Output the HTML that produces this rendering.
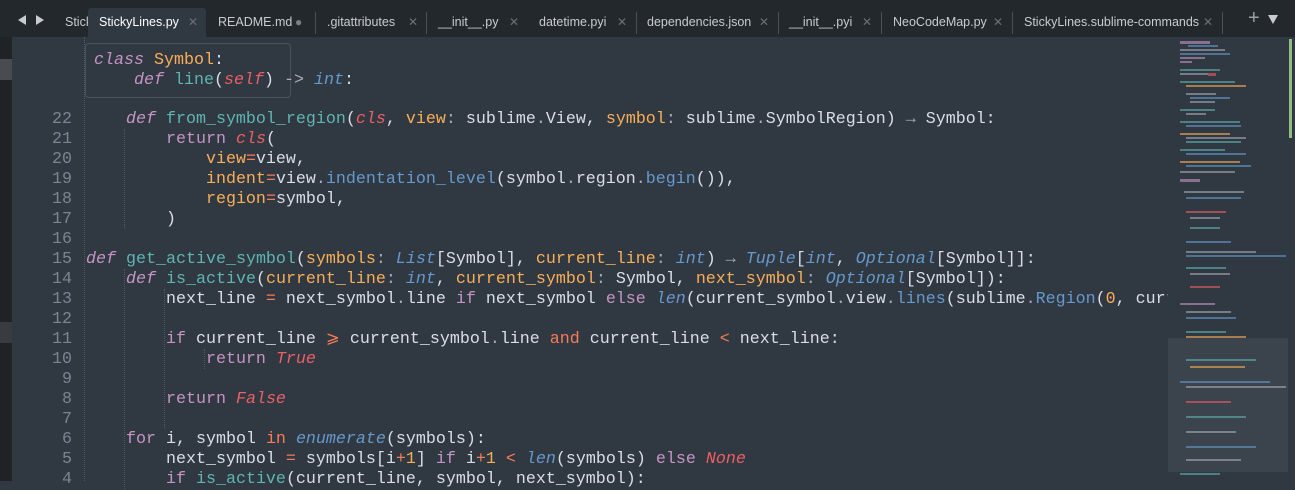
<!DOCTYPE html>
<html><head><meta charset="utf-8"><style>
body{margin:0;width:1295px;height:481px;overflow:hidden;background:#303841;position:relative;font-family:"Liberation Sans",sans-serif}
#tabbar{position:absolute;left:0;top:0;width:1295px;height:37px;background:#23282d}
.tab{position:absolute;top:8px;height:29px;line-height:28px;font-size:12.5px;color:#c8ccd0;white-space:nowrap}
.x{position:absolute;top:8px;line-height:28px;color:#6a7078;font-size:12px}
.sep{position:absolute;top:12px;width:1px;height:22px;background:#4a5058}
#left{position:absolute;left:0;top:37px;width:12px;height:444px;background:#1f2326}
#ed{position:absolute;left:12px;top:37px;width:1283px;height:444px;background:#303841}
.code{position:absolute;left:0;top:0;font-family:"Liberation Mono",monospace;font-size:16.67px;line-height:20px;color:#d8dee9;white-space:pre}
.ln{position:absolute;left:20px;width:40px;text-align:right;font-family:"Liberation Mono",monospace;font-size:16.67px;line-height:20px;color:#7b8592;white-space:pre}
.k{color:#c594c5}.i{font-style:italic}.f{color:#5fb4b4}.p{color:#f9ae58}.t{color:#6699cc}.r{color:#ec5f66}.o{color:#f97b58}.g{color:#a6acb9}
.guide{position:absolute;width:0;border-left:1px dotted #4f5864}
</style></head><body>
<div id="tabbar">
 <div style="position:absolute;left:18px;top:15px;width:0;height:0;border-top:5px solid transparent;border-bottom:5px solid transparent;border-right:8px solid #c8ccd0"></div>
 <div style="position:absolute;left:36px;top:15px;width:0;height:0;border-top:5px solid transparent;border-bottom:5px solid transparent;border-left:8px solid #c8ccd0"></div>
 <div class="tab" style="left:65px;width:23px;overflow:hidden">Sticky</div>
 <div class="tab" style="left:88px;width:118px;background:#303841;border-radius:3px 3px 0 0;color:#fff;padding-left:11px;box-sizing:border-box">StickyLines.py</div>
 <div class="x" style="left:188px">✕</div>
 <div class="tab" style="left:218px">README.md</div><div class="x" style="left:295px;color:#7a8088">●</div>
 <div class="sep" style="left:315px"></div>
 <div class="tab" style="left:327px">.gitattributes</div><div class="x" style="left:408px">✕</div>
 <div class="sep" style="left:426px"></div>
 <div class="tab" style="left:438px">__init__.py</div><div class="x" style="left:509px">✕</div>
 <div class="tab" style="left:539px">datetime.pyi</div><div class="x" style="left:617px">✕</div>
 <div class="sep" style="left:636px"></div>
 <div class="tab" style="left:647px">dependencies.json</div><div class="x" style="left:759px">✕</div>
 <div class="sep" style="left:778px"></div>
 <div class="tab" style="left:789px">__init__.pyi</div><div class="x" style="left:862px">✕</div>
 <div class="sep" style="left:881px"></div>
 <div class="tab" style="left:893px">NeoCodeMap.py</div><div class="x" style="left:993px">✕</div>
 <div class="sep" style="left:1012px"></div>
 <div class="tab" style="left:1024px">StickyLines.sublime-commands</div><div class="x" style="left:1203px">✕</div>
 <div class="sep" style="left:1222px"></div>
 <div class="tab" style="left:1248px;font-size:20px;color:#9aa0a8;top:4px">+</div>
 <div style="position:absolute;left:1268px;top:15px;width:0;height:0;border-left:5px solid transparent;border-right:5px solid transparent;border-top:9px solid #c8ccd0"></div>
</div>
<div id="left">
 <div style="position:absolute;top:22px;left:0;width:12px;height:21px;background:#484b4f"></div>
 <div style="position:absolute;top:285px;left:0;width:12px;height:21px;background:#383b3f"></div>
</div>
<div id="ed">
 <div class="guide" style="left:72px;top:0;height:444px"></div>
 <div class="guide" style="left:112px;top:92px;height:100px"></div>
 <div class="guide" style="left:112px;top:232px;height:220px"></div>
 <div class="guide" style="left:152px;top:252px;height:140px"></div>
 <div class="guide" style="left:192px;top:312px;height:20px"></div>
 <div class="ln" style="top:73px">22
21
20
19
18
17
16
15
14
13
12
11
10
 9
 8
 7
 6
 5
 4</div>
 <div class="code" style="left:74px;top:73px"><span class="k i">    def</span> <span class="f">from_symbol_region</span>(<span class="r i">cls</span>, <span class="p">view</span><span class="g">:</span> sublime<span class="g">.</span>View, <span class="p">symbol</span><span class="g">:</span> sublime<span class="g">.</span>SymbolRegion) <span class="g">→</span> Symbol:
        <span class="k">return</span> <span class="r i">cls</span>(
            <span class="p">view</span><span class="o">=</span>view,
            <span class="p">indent</span><span class="o">=</span>view<span class="g">.</span><span class="t">indentation_level</span>(symbol<span class="g">.</span>region<span class="g">.</span><span class="t">begin</span>()),
            <span class="p">region</span><span class="o">=</span>symbol,
        )

<span class="k i">def</span> <span class="f">get_active_symbol</span>(<span class="p">symbols</span><span class="g">:</span> <span class="t i">List</span>[Symbol], <span class="p">current_line</span><span class="g">:</span> <span class="t i">int</span>) <span class="g">→</span> <span class="t i">Tuple</span>[<span class="t i">int</span>, <span class="t i">Optional</span>[Symbol]]:
    <span class="k i">def</span> <span class="f">is_active</span>(<span class="p">current_line</span><span class="g">:</span> <span class="t i">int</span>, <span class="p">current_symbol</span><span class="g">:</span> Symbol, <span class="p">next_symbol</span><span class="g">:</span> <span class="t i">Optional</span>[Symbol]):
        next_line <span class="o">=</span> next_symbol<span class="g">.</span>line <span class="k">if</span> next_symbol <span class="k">else</span> <span class="t i">len</span>(current_symbol<span class="g">.</span>view<span class="g">.</span><span class="t">lines</span>(sublime<span class="g">.</span><span class="t">Region</span>(<span class="p">0</span>, curre

        <span class="k">if</span> current_line <span class="o">⩾</span> current_symbol<span class="g">.</span>line <span class="o">and</span> current_line <span class="o">&lt;</span> next_line:
            <span class="k">return</span> <span class="r i">True</span>

        <span class="k">return</span> <span class="r i">False</span>

    <span class="k">for</span> i, symbol <span class="o">in</span> <span class="t i">enumerate</span>(symbols):
        next_symbol <span class="o">=</span> symbols[i<span class="o">+</span><span class="p">1</span>] <span class="k">if</span> i<span class="o">+</span><span class="p">1</span> <span class="o">&lt;</span> <span class="t i">len</span>(symbols) <span class="k">else</span> <span class="r i">None</span>
        <span class="k">if</span> <span class="f">is_active</span>(current_line, symbol, next_symbol):</div>
 <div style="position:absolute;left:73px;top:6px;width:206px;height:55px;background:#303841;border:1px solid #4a525c;border-radius:4px;box-sizing:border-box"></div>
 <div class="code" style="left:82px;top:14px"><span class="k i">class</span> <span class="p">Symbol</span>:
    <span class="k i">def</span> <span class="f">line</span>(<span class="r i">self</span>) <span class="g">-&gt;</span> <span class="t i">int</span>:</div>
 <div style="position:absolute;left:1156px;top:0;width:127px;height:444px;background:#303841"></div>
 <div style="position:absolute;left:1156px;top:301px;width:120px;height:134px;background:#3b434c"></div>
 <svg style="position:absolute;left:1168px;top:4px" width="110" height="440">
  <g opacity="0.6">
  <rect x="0" y="0" width="30" height="3" fill="#c594c5"/><rect x="8" y="4" width="30" height="2" fill="#6699cc"/><rect x="0" y="8" width="45" height="2" fill="#a6acb9"/><rect x="0" y="12" width="50" height="2" fill="#6699cc"/><rect x="0" y="16" width="25" height="2" fill="#c594c5"/><rect x="0" y="20" width="12" height="2" fill="#c594c5"/>
  <rect x="0" y="28" width="40" height="2" fill="#5fb4b4"/><rect x="0" y="32" width="28" height="2" fill="#a6acb9"/><rect x="28" y="32" width="8" height="3" fill="#ec5f66"/>
  <rect x="0" y="40" width="55" height="2" fill="#5fb4b4"/><rect x="6" y="44" width="60" height="2" fill="#f9ae58"/>
  <rect x="6" y="52" width="30" height="2" fill="#a6acb9"/><rect x="10" y="56" width="40" height="2" fill="#6699cc"/><rect x="10" y="60" width="25" height="2" fill="#a6acb9"/>
  <rect x="0" y="68" width="35" height="2" fill="#5fb4b4"/><rect x="6" y="72" width="20" height="2" fill="#a6acb9"/>
  <rect x="0" y="80" width="60" height="2" fill="#5fb4b4"/><rect x="6" y="84" width="55" height="2" fill="#6699cc"/>
  <rect x="0" y="92" width="50" height="2" fill="#f9ae58"/><rect x="6" y="96" width="60" height="2" fill="#a6acb9"/><rect x="6" y="100" width="55" height="2" fill="#5fb4b4"/>
  <rect x="0" y="108" width="45" height="2" fill="#5fb4b4"/><rect x="6" y="112" width="60" height="2" fill="#6699cc"/>
  <rect x="0" y="120" width="60" height="2" fill="#f9ae58"/><rect x="6" y="124" width="65" height="2" fill="#6699cc"/><rect x="0" y="130" width="55" height="2" fill="#a6acb9"/>
  <rect x="0" y="138" width="20" height="3" fill="#c594c5"/><rect x="4" y="150" width="60" height="2" fill="#a6acb9"/><rect x="6" y="156" width="55" height="2" fill="#6699cc"/>
  <rect x="6" y="170" width="40" height="2" fill="#ec5f66"/><rect x="10" y="176" width="30" height="2" fill="#a6acb9"/><rect x="10" y="186" width="30" height="2" fill="#5fb4b4"/>
  <rect x="6" y="200" width="45" height="2" fill="#6699cc"/><rect x="6" y="210" width="70" height="2" fill="#a6acb9"/><rect x="6" y="214" width="100" height="2" fill="#6699cc"/>
  <rect x="6" y="226" width="40" height="2" fill="#5fb4b4"/><rect x="10" y="232" width="40" height="2" fill="#a6acb9"/><rect x="10" y="245" width="30" height="2" fill="#ec5f66"/>
  <rect x="0" y="262" width="35" height="2" fill="#c594c5"/><rect x="6" y="270" width="45" height="2" fill="#a6acb9"/><rect x="6" y="276" width="50" height="2" fill="#6699cc"/>
  <rect x="6" y="290" width="40" height="2" fill="#5fb4b4"/><rect x="6" y="295" width="60" height="2" fill="#f9ae58"/>
  <rect x="6" y="318" width="70" height="2" fill="#5fb4b4"/><rect x="10" y="325" width="55" height="2" fill="#f9ae58"/>
  <rect x="0" y="340" width="90" height="2" fill="#6699cc"/><rect x="6" y="345" width="100" height="2" fill="#a6acb9"/><rect x="6" y="360" width="45" height="2" fill="#ec5f66"/>
  <rect x="6" y="375" width="60" height="2" fill="#5fb4b4"/><rect x="6" y="390" width="50" height="2" fill="#a6acb9"/><rect x="6" y="405" width="70" height="2" fill="#6699cc"/><rect x="6" y="418" width="55" height="2" fill="#a6acb9"/><rect x="0" y="432" width="40" height="2" fill="#5fb4b4"/>
  </g>
 </svg>
 <div style="position:absolute;left:1277px;top:2px;width:3px;height:99px;background:#8fbf7f"></div>
</div>
</body></html>
